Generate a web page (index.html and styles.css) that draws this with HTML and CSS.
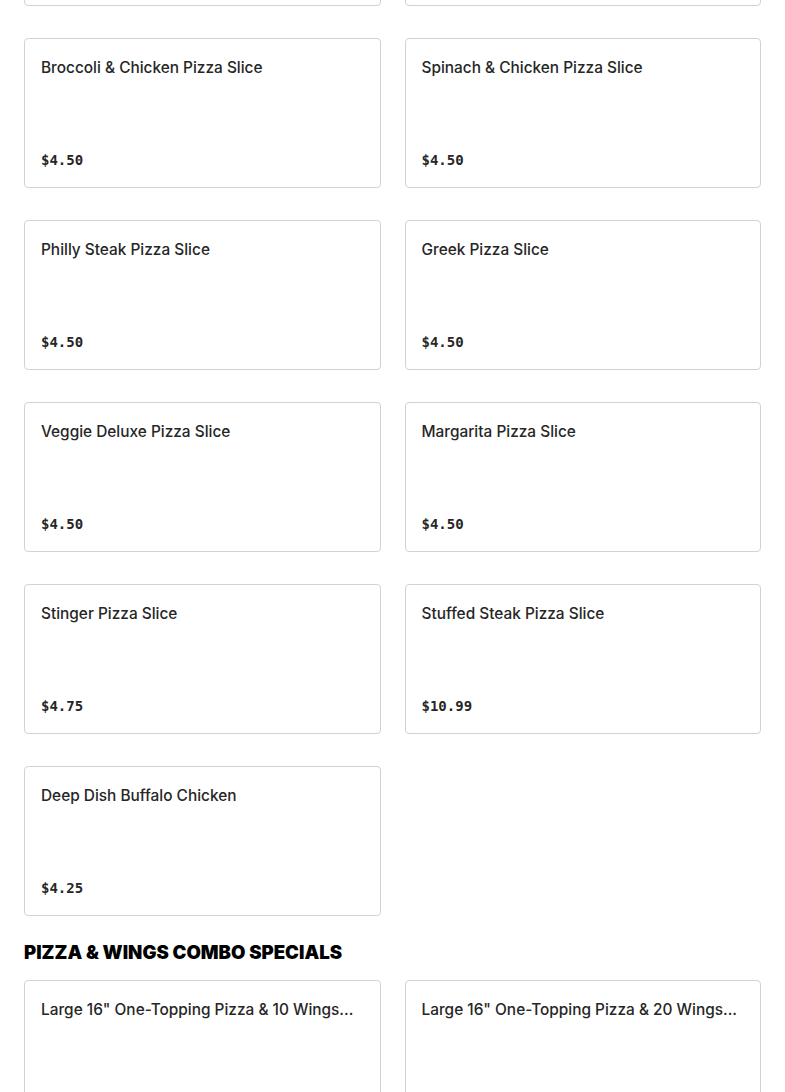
FILE: index.html
```html
<!DOCTYPE html>
<html>
<head>
<meta charset="utf-8">
<link rel="stylesheet" href="styles.css">
</head>
<body>
<main class="menu">
  <section class="section section--scrolled">
    <div class="grid">
      <div class="card"><div class="card-title">Cheese Pizza Slice</div><div class="card-price">$3.75</div></div>
      <div class="card"><div class="card-title">Pepperoni Pizza Slice</div><div class="card-price">$4.25</div></div>
      <div class="card"><div class="card-title">Broccoli &amp; Chicken Pizza Slice</div><div class="card-price">$4.50</div></div>
      <div class="card"><div class="card-title">Spinach &amp; Chicken Pizza Slice</div><div class="card-price">$4.50</div></div>
      <div class="card"><div class="card-title">Philly Steak Pizza Slice</div><div class="card-price">$4.50</div></div>
      <div class="card"><div class="card-title">Greek Pizza Slice</div><div class="card-price">$4.50</div></div>
      <div class="card"><div class="card-title">Veggie Deluxe Pizza Slice</div><div class="card-price">$4.50</div></div>
      <div class="card"><div class="card-title">Margarita Pizza Slice</div><div class="card-price">$4.50</div></div>
      <div class="card"><div class="card-title">Stinger Pizza Slice</div><div class="card-price">$4.75</div></div>
      <div class="card"><div class="card-title">Stuffed Steak Pizza Slice</div><div class="card-price">$10.99</div></div>
      <div class="card"><div class="card-title">Deep Dish Buffalo Chicken</div><div class="card-price">$4.25</div></div>
    </div>
  </section>
  <section class="section">
    <h2 class="section-title">PIZZA &amp; WINGS COMBO SPECIALS</h2>
    <div class="grid">
      <div class="card"><div class="card-title">Large 16" One-Topping Pizza &amp; 10 Wings...</div><div class="card-price">$29.99</div></div>
      <div class="card"><div class="card-title">Large 16" One-Topping Pizza &amp; 20 Wings...</div><div class="card-price">$39.99</div></div>
    </div>
  </section>
</main>
</body>
</html>
```
FILE: styles.css
```css
html, body {
  margin: 0;
  padding: 0;
  background: #ffffff;
}
body {
  font-family: Inter, "Noto Sans", "Liberation Sans", sans-serif;
  color: #262626;
  overflow: hidden;
}
.menu {
  padding: 0 24px;
}
.section--scrolled {
  margin-top: -144px;
}
.grid {
  display: grid;
  grid-template-columns: minmax(0, 1fr) minmax(0, 1fr);
  column-gap: 24px;
  row-gap: 32px;
}
.card {
  box-sizing: border-box;
  height: 150px;
  min-width: 0;
  border: 1px solid #d2d2d2;
  border-radius: 4px;
  padding: 17px 16px;
  display: flex;
  flex-direction: column;
  justify-content: space-between;
}
.card-title {
  font-size: 15.4px;
  line-height: 24px;
  font-weight: 500;
  color: #262626;
  white-space: nowrap;
  overflow: hidden;
  text-overflow: ellipsis;
}
.card-price {
  font-family: "DejaVu Sans Mono", "Liberation Mono", monospace;
  font-size: 14px;
  line-height: 20px;
  font-weight: 700;
  color: #262626;
}
.section-title {
  margin: 22px 0 14px;
  font-family: Inter, "Liberation Sans", sans-serif;
  font-size: 18.6px;
  line-height: 28px;
  font-weight: 900;
  color: #000;
}
```
